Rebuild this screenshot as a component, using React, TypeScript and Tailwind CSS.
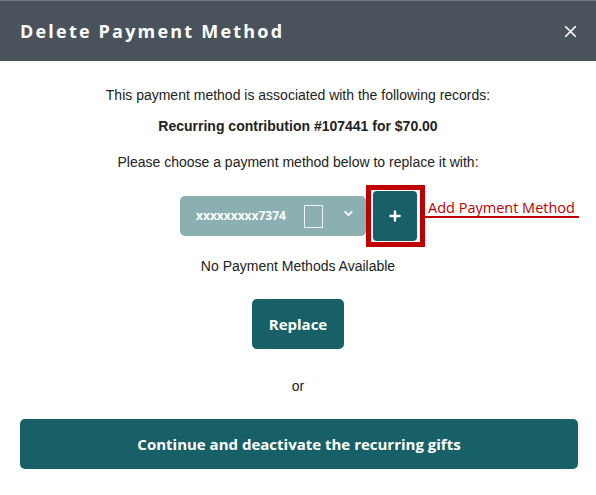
import { ChevronDown, Plus, X } from "lucide-react";

const DeletePaymentModal = () => {
  return (
    <div className="w-[596px] h-[495px] bg-white overflow-hidden">
      {/* Header */}
      <div className="h-[61px] bg-[#4a535b] border-t border-[#737b82] flex items-center justify-between pl-[20px] pr-[16px]">
        <h1 className="text-white text-[18px] font-bold tracking-[2.2px] font-['Open_Sans',sans-serif] leading-none">
          Delete Payment Method
        </h1>
        <X size={19} strokeWidth={2.2} className="text-white" />
      </div>

      <div className="flex flex-col items-center font-['Liberation_Sans',Arial,sans-serif] text-[14px] leading-[16px] text-[#222]">
        <p className="mt-[26px]">
          This payment method is associated with the following records:
        </p>
        <p className="mt-[15px] font-bold">
          Recurring contribution #107441 for $70.00
        </p>
        <p className="mt-[20px]">
          Please choose a payment method below to replace it with:
        </p>

        {/* Select + add button */}
        <div className="mt-[15px] flex items-center pl-[9px]">
          <div className="w-[186px] h-[40px] rounded-[5px] bg-[#8ab0b2] flex items-center pl-[16px] text-white">
            <span className="font-['Open_Sans',sans-serif] font-bold text-[12px] w-[108px]">
              xxxxxxxxx7374
            </span>
            <span className="w-[19px] h-[23px] border border-[#eef3f3]" />
            <ChevronDown size={13} strokeWidth={3.5} className="ml-[19px] mb-[6px]" />
          </div>
          <div className="relative border-[5px] border-[#c00000] pl-[2px] pr-[3px] py-[1px]">
            <button className="w-[44px] h-[50px] rounded-[4px] bg-[#186067] flex items-center justify-center text-white">
              <Plus size={16} strokeWidth={3.5} />
            </button>
            <div className="absolute left-[calc(100%+5px)] top-[10px] w-[154px] pl-[3px] border-b-2 border-[#c00000] text-[#c00000] font-['Open_Sans',sans-serif] text-[14.5px] leading-[16px] whitespace-nowrap">
              Add Payment Method
            </div>
          </div>
        </div>

        <p className="mt-[11px]">No Payment Methods Available</p>

        <button className="mt-[25px] w-[92px] h-[50px] rounded-[5px] bg-[#186067] text-white font-bold font-['Open_Sans',sans-serif] text-[15px]">
          Replace
        </button>

        <p className="mt-[29px]">or</p>

        <div className="self-stretch mt-[25px] ml-[20px] mr-[18px]">
          <button className="w-full h-[50px] rounded-[5px] bg-[#186067] text-white font-bold font-['Open_Sans',sans-serif] text-[15px]">
            Continue and deactivate the recurring gifts
          </button>
        </div>
      </div>
    </div>
  );
};

export default function App() {
  return <DeletePaymentModal />;
}
